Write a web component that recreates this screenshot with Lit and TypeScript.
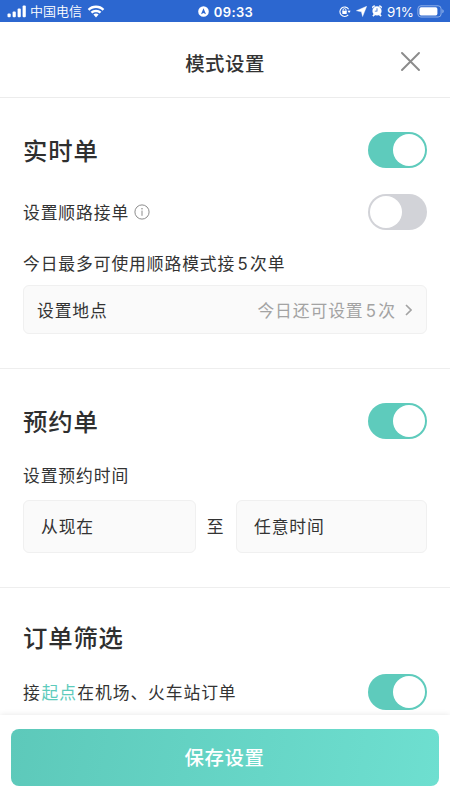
import { LitElement, html, css } from "lit";
import { customElement, property } from "lit/decorators.js";

@customElement("toggle-switch")
class ToggleSwitch extends LitElement {
  @property({ type: Boolean, reflect: true }) on = false;

  static styles = css`
    :host {
      display: flex;
      flex: none;
      box-sizing: border-box;
      width: 59px;
      height: 36px;
      padding: 2px;
      border-radius: 18px;
      background: #d2d3d8;
    }
    :host([on]) {
      background: #5ecbbc;
      justify-content: flex-end;
    }
    .knob {
      width: 32px;
      height: 32px;
      border-radius: 50%;
      background: #fff;
    }
  `;

  render() {
    return html`<div class="knob"></div>`;
  }
}

@customElement("status-bar")
class StatusBar extends LitElement {
  static styles = css`
    :host {
      display: grid;
      grid-template-columns: 1fr auto 1fr;
      align-items: center;
      box-sizing: border-box;
      height: 22px;
      padding: 0 6px 0 7px;
      background: #2c67d0;
      color: #fff;
      font: 13px/22px Inter, "Noto Sans CJK SC", sans-serif;
    }
    .group {
      display: flex;
      align-items: center;
      height: 22px;
    }
    .right {
      justify-content: flex-end;
    }
    svg {
      display: block;
      flex: none;
      fill: #fff;
    }
    .carrier {
      margin: 0 5px 0 4px;
      font-family: "Noto Sans CJK SC", sans-serif;
      font-weight: 350;
      line-height: 20px;
    }
    .time {
      margin-left: 5px;
      font-weight: 600;
      letter-spacing: 0.4px;
      padding-top: 1px;
    }
    .percent {
      margin: 0 3px 0 5px;
      padding-top: 1px;
      letter-spacing: 0;
      font-size: 13.4px;
    }
    .gap {
      margin-left: 5px;
    }
  `;

  render() {
    return html`
      <div class="group">
        <svg width="19" height="13" viewBox="0 0 19 13">
          <rect x="0.5" y="8.6" width="3.2" height="3.6" rx="1" />
          <rect x="5.6" y="6.4" width="3.2" height="5.8" rx="1" />
          <rect x="10.6" y="3.6" width="3.2" height="8.6" rx="1" />
          <rect x="15.6" y="0.5" width="3.2" height="11.7" rx="1" />
        </svg>
        <span class="carrier">中国电信</span>
        <svg width="18" height="13" viewBox="0 0 18 13">
          <path d="M9 0.6C5.7 0.6 2.9 1.8 0.7 3.9L2.4 5.7C4.2 4 6.4 3.1 9 3.1S13.8 4 15.6 5.7L17.3 3.9C15.1 1.8 12.3 0.6 9 0.6Z" />
          <path d="M9 4.7C6.9 4.7 5.1 5.5 3.6 6.8L5.3 8.6C6.3 7.7 7.6 7.2 9 7.2S11.7 7.7 12.7 8.6L14.4 6.8C12.9 5.5 11.1 4.7 9 4.7Z" />
          <path d="M9 8.6C8 8.6 7.1 9 6.4 9.6L9 12.4L11.6 9.6C10.9 9 10 8.6 9 8.6Z" />
        </svg>
      </div>
      <div class="group">
        <svg width="11" height="11" viewBox="0 0 11 11">
          <path fill-rule="evenodd" d="M5.5 0.2A5.3 5.3 0 1 0 5.5 10.8A5.3 5.3 0 1 0 5.5 0.2ZM5.5 2.2L8 8.2L5.5 7.1L3 8.2Z" />
        </svg>
        <span class="time">09:33</span>
      </div>
      <div class="group right">
        <svg width="12" height="11" viewBox="0 0 12 11">
          <path d="M9.6 3.2A4.7 4.7 0 1 0 9.2 8.8M10.1 5.6V4.8" fill="none" stroke="#fff" stroke-width="1.1" />
          <path d="M8.5 4.7H11.7L10.1 7Z" />
          <path d="M4 5V4.1a1.5 1.5 0 0 1 3 0V5" fill="none" stroke="#fff" stroke-width="0.9" />
          <rect x="3.3" y="4.8" width="4.4" height="3.2" rx="0.5" />
        </svg>
        <svg class="gap" width="11" height="11" viewBox="0 0 11 11">
          <path d="M10.7 0.3L6.6 10.6L5.4 5.8L0.4 4.7Z" stroke="#fff" stroke-width="0.4" stroke-linejoin="round" />
        </svg>
        <svg class="gap" width="10" height="12" viewBox="0 0 10 12">
          <path fill-rule="evenodd" d="M5 1.3A4.6 4.6 0 1 0 5 10.5A4.6 4.6 0 1 0 5 1.3ZM4.6 3.2H5.4V6.6H2.8V5.8H4.6Z" />
          <path d="M0.2 3.1A2 2 0 0 1 3 0.9ZM9.8 3.1A2 2 0 0 0 7 0.9ZM1.9 9L0.7 10.8L1.7 11.3L3 9.8ZM8.1 9L9.3 10.8L8.3 11.3L7 9.8Z" stroke="#fff" stroke-width="0.6" />
        </svg>
        <span class="percent">91%</span>
        <svg width="27" height="13" viewBox="0 0 27 13">
          <rect x="0.9" y="0.8" width="23.2" height="11.2" rx="3" fill="none" stroke="#8fb0e8" />
          <rect x="2.4" y="2.3" width="18" height="8.2" rx="1.7" />
          <path d="M25.3 4.3V8.3C26.2 8 26.7 7.2 26.7 6.3S26.2 4.6 25.3 4.3Z" fill="#8fb0e8" />
        </svg>
      </div>
    `;
  }
}

@customElement("app-root")
class AppRoot extends LitElement {
  static styles = css`
    :host {
      display: flex;
      flex-direction: column;
      height: 800px;
      overflow: hidden;
      background: #fff;
      color: #333;
      font: 16.8px/24px "Noto Sans CJK SC", sans-serif;
      letter-spacing: 0.9px;
    }
    status-bar {
      flex: none;
      letter-spacing: 0;
    }
    .header {
      flex: none;
      display: grid;
      grid-template-columns: 1fr auto 1fr;
      align-items: center;
      box-sizing: border-box;
      height: 76px;
      padding: 5px 30px 0 30px;
      border-bottom: 1px solid #ececec;
    }
    .title {
      grid-column: 2;
      font-size: 19.4px;
      font-weight: 500;
      letter-spacing: 0.5px;
      padding-top: 1px;
    }
    .close {
      justify-self: end;
      margin-bottom: 2px;
    }
    svg {
      display: block;
    }
    .body {
      flex: 1;
      min-height: 0;
      overflow: hidden;
    }
    .section {
      padding: 34px 23px 34px;
      border-bottom: 1px solid #eee;
    }
    .section.last {
      border: 0;
      padding-top: 31px;
    }
    .row {
      display: flex;
      align-items: center;
      justify-content: space-between;
      height: 36px;
    }
    .heading {
      font-size: 24.4px;
      font-weight: 500;
      letter-spacing: 0.8px;
      color: #2f2f2f;
      padding-bottom: 1px;
    }
    .row.next {
      margin-top: 26px;
    }
    .row.filter {
      margin-top: 19px;
    }
    .label {
      display: flex;
      align-items: center;
      gap: 5px;
    }
    .note {
      margin-top: 21px;
    }
    .digit {
      display: inline-block;
      width: 14.8px;
      text-align: center;
      font-family: Inter, sans-serif;
      letter-spacing: 0;
      line-height: 20px;
    }
    .field {
      box-sizing: border-box;
      display: flex;
      align-items: center;
      border: 1px solid #f0f0f0;
      border-radius: 6px;
      background: #fafafa;
    }
    .place {
      height: 49px;
      margin-top: 10px;
      padding: 0 14px 0 13px;
      justify-content: space-between;
    }
    .hint {
      display: flex;
      align-items: center;
      gap: 9px;
      color: #a3a3a3;
    }
    .sub {
      margin-top: 24px;
    }
    .times {
      display: grid;
      grid-template-columns: 173px 40px 1fr;
      align-items: center;
      margin-top: 13px;
      height: 53px;
    }
    .times .field {
      height: 53px;
      padding: 0 0 1px 17px;
    }
    .to {
      text-align: center;
      padding: 0 1px 1px 0;
    }
    .accent {
      color: #5ecbbc;
      margin: 0 0.5px 0 0.8px;
    }
    .footer {
      flex: none;
      box-sizing: border-box;
      height: 85px;
      padding: 14px 11px;
      background: #fff;
      box-shadow: 0 0 6px rgba(0, 0, 0, 0.1);
      z-index: 1;
    }
    .save {
      display: block;
      box-sizing: border-box;
      width: 100%;
      height: 57px;
      padding: 0 1px 2px 0;
      border: 0;
      border-radius: 8px;
      background: linear-gradient(100deg, #5dc9ba, #6edfd0);
      color: #fff;
      font: 500 19.4px/55px "Noto Sans CJK SC", sans-serif;
      letter-spacing: 0.6px;
    }
  `;

  render() {
    return html`
      <status-bar></status-bar>
      <div class="header">
        <div class="title">模式设置</div>
        <svg class="close" width="19" height="19" viewBox="0 0 19 19">
          <path d="M1 1L18 18M18 1L1 18" fill="none" stroke="#8b8b8b" stroke-width="1.9" stroke-linecap="round" />
        </svg>
      </div>
      <div class="body">
        <div class="section">
          <div class="row">
            <div class="heading">实时单</div>
            <toggle-switch on></toggle-switch>
          </div>
          <div class="row next">
            <div class="label">
              设置顺路接单
              <svg width="16" height="16" viewBox="0 0 16 16">
                <circle cx="8" cy="8" r="7.1" fill="none" stroke="#8c8c8c" />
                <circle cx="8" cy="4.7" r="0.8" fill="#8c8c8c" />
                <path d="M8 6.6V11.8" stroke="#8c8c8c" />
              </svg>
            </div>
            <toggle-switch></toggle-switch>
          </div>
          <div class="note">今日最多可使用顺路模式接<span class="digit">5</span>次单</div>
          <div class="field place">
            <span>设置地点</span>
            <span class="hint">
              <span>今日还可设置<span class="digit">5</span>次</span>
              <svg width="7" height="12" viewBox="0 0 7 12">
                <path d="M1 1L6 6L1 11" fill="none" stroke="#a3a3a3" stroke-width="1.6" />
              </svg>
            </span>
          </div>
        </div>
        <div class="section">
          <div class="row">
            <div class="heading">预约单</div>
            <toggle-switch on></toggle-switch>
          </div>
          <div class="sub">设置预约时间</div>
          <div class="times">
            <div class="field">从现在</div>
            <div class="to">至</div>
            <div class="field">任意时间</div>
          </div>
        </div>
        <div class="section last">
          <div class="row"><div class="heading">订单筛选</div></div>
          <div class="row filter">
            <div>接<span class="accent">起点</span>在机场、火车站订单</div>
            <toggle-switch on></toggle-switch>
          </div>
        </div>
      </div>
      <div class="footer"><button class="save">保存设置</button></div>
    `;
  }
}
